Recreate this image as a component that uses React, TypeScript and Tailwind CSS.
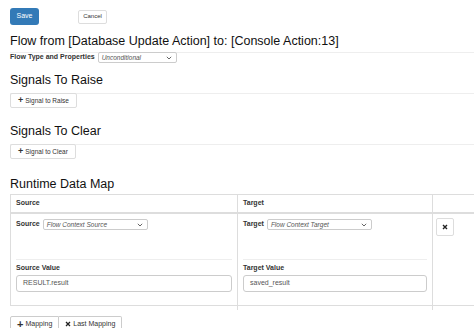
import React from "react";

function Chevron() {
  return (
    <svg width="6" height="4" viewBox="0 0 6 4" className="ml-auto">
      <path d="M0.8 0.8 L3 3 L5.2 0.8" fill="none" stroke="#555" strokeWidth="0.9" />
    </svg>
  );
}

function FakeSelect({ value, width }: { value: string; width: string }) {
  return (
    <div className={`flex items-center h-[11px] ${width} border border-[#ccc] rounded-[2px] bg-white pl-[3px] pr-[4px] text-[6.5px] italic text-[#555]`}>
      <span>{value}</span>
      <Chevron />
    </div>
  );
}

function Heading({ children, className }: { children: React.ReactNode; className: string }) {
  return (
    <div className={`text-[12.5px] leading-[15px] text-[#111] border-b border-[#eee] ${className}`}>
      {children}
    </div>
  );
}

function PlusButton({ label }: { label: string }) {
  return (
    <div className="flex">
      <button className="flex items-center h-[15px] px-[7px] border border-[#ddd] rounded-[2px] bg-white text-[6.5px] text-[#333] -mt-px">
        <span className="text-[9px] font-bold mr-[2px] leading-none">+</span>
        {label}
      </button>
    </div>
  );
}

function MapCell({ label, select, valueLabel, value }: { label: string; select: string; valueLabel: string; value: string }) {
  return (
    <div className="px-[5px] pt-[5px] pb-[18px] flex flex-col">
      <div className="flex items-center gap-[3px]">
        <span className="text-[7px] font-bold text-[#333]">{label}</span>
        <FakeSelect value={select} width="w-[105px]" />
      </div>
      <div className="mt-[29px] border-t border-[#eee] pt-[3px]">
        <div className="text-[7px] font-bold text-[#333] leading-[10px]">{valueLabel}</div>
        <div className="mt-[2px] h-[17px] border border-[#ccc] rounded-[3px] flex items-center px-[6px] text-[7px] text-[#555]">
          {value}
        </div>
      </div>
    </div>
  );
}

export default function App() {
  return (
    <div className="w-[474px] h-[328px] overflow-hidden bg-white font-['Liberation_Sans',Arial,sans-serif]">
      <div className="pl-[10px] pt-[8px]">
        <div className="flex items-center">
          <button className="w-[29px] h-[17px] rounded-[3px] bg-[#337ab7] text-white text-[7px]">Save</button>
          <button className="ml-[39px] w-[29px] h-[14px] rounded-[2px] border border-[#ddd] bg-white text-[#333] text-[6px]">Cancel</button>
        </div>

        <Heading className="mt-[9px] pb-[3px]">Flow from [Database Update Action] to: [Console Action:13]</Heading>

        <div className="flex items-center gap-[3px] h-[11px] -mt-px">
          <span className="text-[7px] font-bold text-[#333]">Flow Type and Properties</span>
          <FakeSelect value="Unconditional" width="w-[79px]" />
        </div>

        <Heading className="mt-[10px] pb-[5px]">Signals To Raise</Heading>
        <PlusButton label="Signal to Raise" />

        <Heading className="mt-[16px] pb-[5px]">Signals To Clear</Heading>
        <PlusButton label="Signal to Clear" />

        <div className="mt-[18px] text-[12.5px] leading-[15px] text-[#111]">Runtime Data Map</div>

        <div className="mt-[2px] w-[500px] border border-[#ddd]">
          <div className="grid grid-cols-[227px_195px_1fr] h-[19px] border-b-2 border-[#ddd] text-[7px] font-bold text-[#333]">
            <div className="px-[5px] flex items-center border-r border-[#ddd]">Source</div>
            <div className="px-[5px] flex items-center border-r border-[#ddd]">Target</div>
            <div></div>
          </div>
          <div className="grid grid-cols-[227px_195px_1fr] h-[91px]">
            <div className="border-r border-[#ddd]">
              <MapCell label="Source" select="Flow Context Source" valueLabel="Source Value" value="RESULT.result" />
            </div>
            <div className="border-r border-[#ddd]">
              <MapCell label="Target" select="Flow Context Target" valueLabel="Target Value" value="saved_result" />
            </div>
            <div className="pl-[3px] pt-[4px]">
              <button className="w-[18px] h-[18px] border border-[#ddd] rounded-[2px] bg-white flex items-center justify-center">
                <svg width="6" height="6" viewBox="0 0 6 6">
                  <path d="M1 1 L5 5 M5 1 L1 5" stroke="#222" strokeWidth="1.4" />
                </svg>
              </button>
            </div>
          </div>
        </div>

        <div className="mt-[10px] flex">
          <button className="flex items-center h-[16px] px-[6px] border border-[#ccc] rounded-l-[2px] bg-white text-[7px] text-[#333]">
            <span className="text-[11px] font-bold mr-[2px] leading-none">+</span>Mapping
          </button>
          <button className="flex items-center h-[16px] px-[6px] border border-l-0 border-[#ccc] rounded-r-[2px] bg-white text-[7px] text-[#333]">
            <svg width="6" height="6" viewBox="0 0 6 6" className="mr-[2px]">
              <path d="M1 1 L5 5 M5 1 L1 5" stroke="#222" strokeWidth="1.3" />
            </svg>
            Last Mapping
          </button>
        </div>
      </div>
    </div>
  );
}
